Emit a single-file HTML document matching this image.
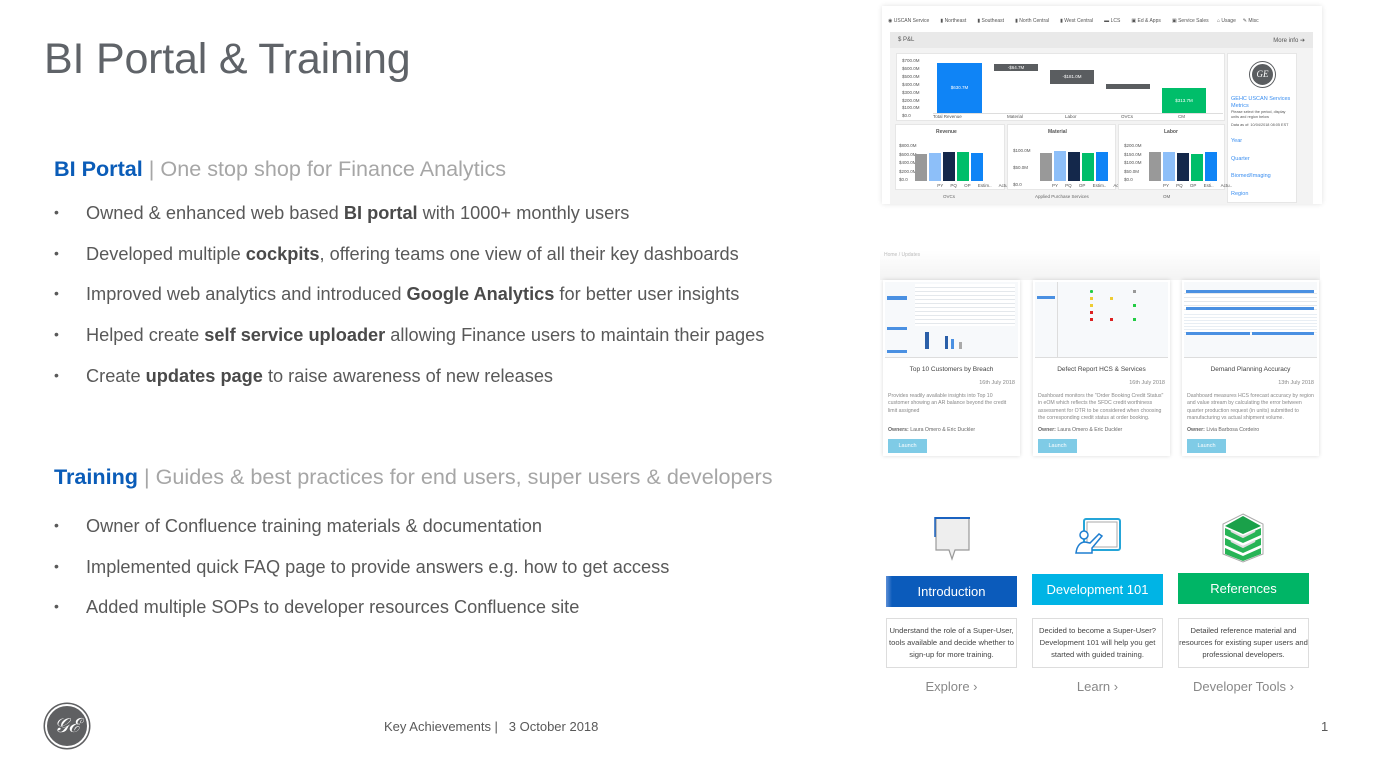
<!DOCTYPE html>
<html><head><meta charset="utf-8"><style>
*{margin:0;padding:0;box-sizing:border-box}
body{width:1373px;height:761px;background:#fff;position:relative;overflow:hidden;font-family:"Liberation Sans",sans-serif;color:#595959}
.a{position:absolute}
h1{position:absolute;left:44px;top:35px;font-weight:normal;font-size:43px;color:#5f6368;letter-spacing:-0.2px}
.hd{position:absolute;left:54px;font-size:21.6px;white-space:nowrap}
.hd b{color:#0a5cb8}
.hd span{color:#a6a6a6}
.bl{position:absolute;left:86px;font-size:18.2px;white-space:nowrap;color:#595959}
.bl:before{content:"•";position:absolute;left:-32px;font-size:14px;top:1px}
.bl b{color:#4a4a4a}
.f{font-size:6px;color:#555}
.box{position:absolute;background:#fff;border:1px solid #e6e6e6}
.bar{position:absolute;bottom:0}
.card{position:absolute;top:280px;width:137px;height:176px;background:#fff;box-shadow:0 0 4px rgba(0,0,0,.15)}
.card .im{position:absolute;left:2px;top:2px;right:2px;height:76px;background:#f7f9fb;border-bottom:1px solid #ddd;overflow:hidden}
.card .t{position:absolute;top:86px;width:100%;text-align:center;font-size:6.5px;color:#444}
.card .d{position:absolute;top:100px;right:5px;font-size:5.5px;color:#888}
.card .p{position:absolute;top:113px;left:5px;right:5px;font-size:5.2px;line-height:7.4px;color:#888}
.card .o{position:absolute;top:147px;left:5px;font-size:5.2px;color:#666}
.card .l{position:absolute;top:159px;left:5px;width:39px;height:14px;background:#7fcbe6;color:#fff;font-size:5.5px;text-align:center;line-height:14px}
.btn{position:absolute;width:131px;height:31px;color:#fff;font-size:13px;text-align:center;line-height:31px}
.ds{position:absolute;top:618px;width:131px;height:50px;border:1px solid #ddd;font-size:7.6px;line-height:12px;text-align:center;color:#444;padding-top:6px;white-space:nowrap;overflow:hidden}
.lk{position:absolute;top:679px;width:131px;text-align:center;font-size:13px;color:#888}
.v{position:absolute;font-size:4.5px;color:#555;white-space:nowrap}
</style></head><body>
<h1>BI Portal &amp; Training</h1>
<div class="hd" style="top:156px"><b>BI Portal</b> <span>| One stop shop for Finance Analytics</span></div>
<div class="bl" style="top:203px">Owned &amp; enhanced web based <b>BI portal</b> with 1000+ monthly users</div>
<div class="bl" style="top:244px">Developed multiple <b>cockpits</b>, offering teams one view of all their key dashboards</div>
<div class="bl" style="top:284px">Improved web analytics and introduced <b>Google Analytics</b> for better user insights</div>
<div class="bl" style="top:325px">Helped create <b>self service uploader</b> allowing Finance users to maintain their pages</div>
<div class="bl" style="top:366px">Create <b>updates page</b> to raise awareness of new releases</div>
<div class="hd" style="top:464px"><b>Training</b> <span>| Guides &amp; best practices for end users, super users &amp; developers</span></div>
<div class="bl" style="top:516px">Owner of Confluence training materials &amp; documentation</div>
<div class="bl" style="top:557px">Implemented quick FAQ page to provide answers e.g. how to get access</div>
<div class="bl" style="top:597px">Added multiple SOPs to developer resources Confluence site</div>

<!-- top dashboard -->
<div class="a" style="left:882px;top:6px;width:440px;height:198px;background:#fff;box-shadow:0 0 5px rgba(0,0,0,.12);overflow:hidden">
<div class="a f" style="left:6px;top:12px;white-space:nowrap;font-size:5px;word-spacing:0">◉ USCAN Service &nbsp;&nbsp;&nbsp;&nbsp;&nbsp;&nbsp; ▮ Northeast &nbsp;&nbsp;&nbsp;&nbsp;&nbsp;&nbsp; ▮ Southeast &nbsp;&nbsp;&nbsp;&nbsp;&nbsp;&nbsp; ▮ North Central &nbsp;&nbsp;&nbsp;&nbsp;&nbsp;&nbsp; ▮ West Central &nbsp;&nbsp;&nbsp;&nbsp;&nbsp;&nbsp; ▬ LCS &nbsp;&nbsp;&nbsp;&nbsp;&nbsp;&nbsp; ▣ Ed &amp; Apps &nbsp;&nbsp;&nbsp;&nbsp;&nbsp;&nbsp; ▣ Service Sales &nbsp;&nbsp;&nbsp;&nbsp; ⌂ Usage &nbsp;&nbsp;&nbsp; ✎ Misc</div>
<div class="a" style="left:8px;top:26px;width:423px;height:172px;background:#f3f3f3">
<div class="a" style="left:0;top:0;width:423px;height:16px;background:#e9e9e9;font-size:6px;color:#555;padding:5px 8px">$ P&amp;L<span style="float:right">More info ➔</span></div>
</div>
</div>
<div class="box" style="left:896px;top:53px;width:329px;height:68px">
<div class="a f" style="left:5px;top:3px;font-size:4.5px;line-height:7.9px">$700.0M<br>$600.0M<br>$500.0M<br>$400.0M<br>$300.0M<br>$200.0M<br>$100.0M<br>$0.0</div>
<div class="a" style="left:40px;top:9px;width:45px;height:50px;background:#0f84f6;color:#fff;font-size:4.5px;text-align:center;line-height:50px">$630.7M</div>
<div class="a" style="left:97px;top:10px;width:44px;height:7px;background:#5a5d60;color:#fff;font-size:4.5px;text-align:center;line-height:7px">-$64.7M</div>
<div class="a" style="left:153px;top:16px;width:44px;height:14px;background:#5a5d60;color:#fff;font-size:4.5px;text-align:center;line-height:14px">-$181.0M</div>
<div class="a" style="left:209px;top:30px;width:44px;height:5px;background:#5a5d60"></div>
<div class="a" style="left:265px;top:34px;width:44px;height:25px;background:#00be6a;color:#fff;font-size:4.5px;text-align:center;line-height:25px">$313.7M</div>
<div class="a" style="left:36px;top:59px;width:290px;border-top:1px solid #ddd"></div>
<div class="a" style="left:0;top:60px;width:329px;font-size:4.5px;color:#555;word-spacing:0"><span class="a" style="left:36px">Total Revenue</span><span class="a" style="left:110px">Material</span><span class="a" style="left:168px">Labor</span><span class="a" style="left:224px">OVCs</span><span class="a" style="left:281px">CM</span></div>
</div>
<div class="box" style="left:1227px;top:53px;width:70px;height:150px">
<div class="a" style="left:22px;top:8px;width:25px;height:25px;border-radius:50%;background:#5a5d60;border:2px solid #fff;box-shadow:0 0 0 1px #5a5d60;color:#fff;font:italic 9px 'Liberation Serif',serif;text-align:center;line-height:21px">GE</div>
<div class="a" style="left:3px;top:42px;font-size:5.5px;color:#3a8ef0;line-height:6.5px">GEHC USCAN Services<br>Metrics</div>
<div class="a" style="left:3px;top:56px;font-size:3.8px;color:#555;line-height:5px">Please select the period, display<br>units and region below</div>
<div class="a" style="left:3px;top:69px;font-size:3.8px;color:#555">Data as of: 10/04/2018 08:05 EST</div>
<div class="a" style="left:3px;top:79px;font-size:5.5px;color:#3a8ef0;line-height:17.5px">Year<br>Quarter<br>Biomed/Imaging<br>Region</div>
</div>
<div class="box" style="left:895px;top:124px;width:110px;height:66px"><div class="a f" style="left:40px;top:4px;font-weight:bold;font-size:5px">Revenue</div>
<div class="v" style="left:3px;top:17px;line-height:8.5px">$800.0M<br>$600.0M<br>$400.0M<br>$200.0M<br>$0.0</div>
<div class="a" style="left:16px;top:23px;height:33px;width:90px">
<div class="bar" style="left:3px;width:12px;height:27px;background:#999"></div><div class="bar" style="left:17px;width:12px;height:28px;background:#8dbff9"></div><div class="bar" style="left:31px;width:12px;height:29px;background:#14284b"></div><div class="bar" style="left:45px;width:12px;height:29px;background:#00be6a"></div><div class="bar" style="left:59px;width:12px;height:28px;background:#0f84f6"></div></div>
<div class="v" style="left:5px;top:58px;word-spacing:6px">&nbsp;&nbsp;&nbsp;&nbsp; PY PQ OP Estim.. Actu..</div></div>
<div class="box" style="left:1007px;top:124px;width:109px;height:66px"><div class="a f" style="left:40px;top:4px;font-weight:bold;font-size:5px">Material</div>
<div class="v" style="left:5px;top:17px;line-height:17px">$100.0M<br>$50.0M<br>$0.0</div>
<div class="a" style="left:16px;top:23px;height:33px;width:90px">
<div class="bar" style="left:16px;width:12px;height:28px;background:#999"></div><div class="bar" style="left:30px;width:12px;height:30px;background:#8dbff9"></div><div class="bar" style="left:44px;width:12px;height:29px;background:#14284b"></div><div class="bar" style="left:58px;width:12px;height:28px;background:#00be6a"></div><div class="bar" style="left:72px;width:12px;height:29px;background:#0f84f6"></div></div>
<div class="v" style="left:15px;top:58px;word-spacing:6px">&nbsp;&nbsp;&nbsp; PY PQ OP Estim.. Actu..</div></div>
<div class="box" style="left:1118px;top:124px;width:107px;height:66px"><div class="a f" style="left:45px;top:4px;font-weight:bold;font-size:5px">Labor</div>
<div class="v" style="left:5px;top:17px;line-height:8.5px">$200.0M<br>$150.0M<br>$100.0M<br>$50.0M<br>$0.0</div>
<div class="a" style="left:16px;top:23px;height:33px;width:90px">
<div class="bar" style="left:14px;width:12px;height:29px;background:#999"></div><div class="bar" style="left:28px;width:12px;height:29px;background:#8dbff9"></div><div class="bar" style="left:42px;width:12px;height:28px;background:#14284b"></div><div class="bar" style="left:56px;width:12px;height:27px;background:#00be6a"></div><div class="bar" style="left:70px;width:12px;height:29px;background:#0f84f6"></div></div>
<div class="v" style="left:15px;top:58px;word-spacing:6px">&nbsp;&nbsp;&nbsp; PY PQ OP Esti.. Actu..</div></div>
<div class="a" style="left:895px;top:192px;width:330px;height:10px;font-size:4.5px;color:#666"><span class="a" style="left:48px;top:2px">OVCs</span><span class="a" style="left:140px;top:2px">Applied Purchase Services</span><span class="a" style="left:268px;top:2px">OM</span></div>

<!-- middle cards -->
<div class="a" style="left:880px;top:250px;width:440px;height:30px;background:linear-gradient(#fff,#f3f3f3)"><span style="font-size:5px;color:#bbb;position:absolute;left:4px;top:2px">Home / Updates</span></div>
<div class="card" style="left:883px"><div class="im">
<div class="a" style="left:30px;top:2px;width:100px;height:42px;background:repeating-linear-gradient(#fff 0 3px,#e4e8ec 3px 4px)"></div>
<div class="a" style="left:40px;top:50px;width:4px;height:17px;background:#2a5fa8"></div><div class="a" style="left:60px;top:54px;width:3px;height:13px;background:#2a5fa8"></div><div class="a" style="left:66px;top:57px;width:3px;height:10px;background:#4a90e2"></div><div class="a" style="left:74px;top:60px;width:3px;height:7px;background:#aaa"></div>
<div class="a" style="left:2px;top:14px;width:20px;height:4px;background:#4a90e2"></div><div class="a" style="left:2px;top:45px;width:20px;height:3px;background:#4a90e2"></div><div class="a" style="left:2px;top:68px;width:20px;height:3px;background:#4a90e2"></div></div>
<div class="t">Top 10 Customers by Breach</div><div class="d">16th July 2018</div>
<div class="p">Provides readily available insights into Top 10 customer showing an AR balance beyond the credit limit assigned</div>
<div class="o"><b>Owners:</b> Laura Omero &amp; Eric Duckler</div><div class="l">Launch</div></div>
<div class="card" style="left:1033px"><div class="im">
<div class="a" style="left:2px;top:14px;width:18px;height:3px;background:#4a90e2"></div><div class="a" style="left:22px;top:0;width:1px;height:76px;background:#ddd"></div>
<div class="a" style="left:55px;top:8px;width:3px;height:3px;background:#2c4;border-radius:1px"></div><div class="a" style="left:55px;top:15px;width:3px;height:3px;background:#ec3"></div><div class="a" style="left:55px;top:22px;width:3px;height:3px;background:#ec3"></div><div class="a" style="left:55px;top:29px;width:3px;height:3px;background:#d22"></div><div class="a" style="left:55px;top:36px;width:3px;height:3px;background:#d22"></div>
<div class="a" style="left:75px;top:15px;width:3px;height:3px;background:#ec3"></div><div class="a" style="left:75px;top:36px;width:3px;height:3px;background:#d22"></div><div class="a" style="left:98px;top:8px;width:3px;height:3px;background:#999"></div><div class="a" style="left:98px;top:22px;width:3px;height:3px;background:#2c4"></div><div class="a" style="left:98px;top:36px;width:3px;height:3px;background:#2c4"></div></div>
<div class="t">Defect Report HCS &amp; Services</div><div class="d">16th July 2018</div>
<div class="p">Dashboard monitors the "Order Booking Credit Status" in eOM which reflects the SFDC credit worthiness assessment for OTR to be considered when choosing the corresponding credit status at order booking.</div>
<div class="o"><b>Owner:</b> Laura Omero &amp; Eric Duckler</div><div class="l">Launch</div></div>
<div class="card" style="left:1182px"><div class="im">
<div class="a" style="left:0;top:8px;width:133px;height:30px;background:repeating-linear-gradient(#fff 0 3px,#e4e8ec 3px 4px)"></div>
<div class="a" style="left:2px;top:8px;width:128px;height:3px;background:#4a90e2"></div><div class="a" style="left:2px;top:25px;width:128px;height:3px;background:#4a90e2"></div>
<div class="a" style="left:0;top:30px;width:133px;height:22px;background:repeating-linear-gradient(#fff 0 2px,#e8eef4 2px 3px)"></div>
<div class="a" style="left:2px;top:50px;width:64px;height:3px;background:#4a90e2"></div><div class="a" style="left:68px;top:50px;width:62px;height:3px;background:#4a90e2"></div></div>
<div class="t">Demand Planning Accuracy</div><div class="d">13th July 2018</div>
<div class="p">Dashboard measures HCS forecast accuracy by region and value stream by calculating the error between quarter production request (in units) submitted to manufacturing vs actual shipment volume.</div>
<div class="o"><b>Owner:</b> Livia Barbosa Cordeiro</div><div class="l">Launch</div></div>

<!-- bottom icons -->
<svg class="a" style="left:933px;top:516px" width="40" height="45" viewBox="0 0 40 45"><path d="M3 2h33v32H22l-3 9-3-9H3z" fill="#eee" stroke="#999" stroke-width="1.2"/><path d="M2 1h35v2H2z" fill="#1a62c0"/><path d="M2 1v20" stroke="#1a62c0" stroke-width="1.5"/></svg>
<svg class="a" style="left:1074px;top:517px" width="48" height="42" viewBox="0 0 48 42"><rect x="10" y="2" width="36" height="31" rx="2" fill="#fff" stroke="#25a5d8" stroke-width="2"/><rect x="13" y="5" width="30" height="25" fill="#fff" stroke="#aaa"/><circle cx="10" cy="18" r="4" fill="#fff" stroke="#1e7ed0" stroke-width="1.5"/><path d="M2 36c1-8 5-11 9-11l5 1 9-9 3 2-10 12v5z" fill="#fff" stroke="#1e7ed0" stroke-width="1.5"/></svg>
<svg class="a" style="left:1220px;top:512px" width="46" height="52" viewBox="0 0 46 52"><path d="M23 2L43 12v30L23 50 3 42V12z" fill="#fff" stroke="#aaa"/><path d="M5 14l18-10 18 10-18 8z" fill="#1aa14a"/><path d="M5 16l18 8 18-8v7l-18 8-18-8z" fill="#27b456"/><path d="M5 26l18 8 18-8v7l-18 8-18-8z" fill="#27b456"/><path d="M5 36l18 8 18-8v6l-18 7-18-7z" fill="#27b456"/><path d="M11 19l12 6 12-6M11 29l12 6 12-6" stroke="#ddd" fill="none" stroke-width="2"/></svg>
<div class="btn" style="left:886px;top:576px;background:linear-gradient(90deg,#5d8fd6 0,#0b5bbb 6px,#0b5bbb)">Introduction</div>
<div class="btn" style="left:1032px;top:574px;background:#00b4e5">Development 101</div>
<div class="btn" style="left:1178px;top:573px;background:#00b566">References</div>
<div class="ds" style="left:886px">Understand the role of a Super-User,<br>tools available and decide whether to<br>sign-up for more training.</div>
<div class="ds" style="left:1032px">Decided to become a Super-User?<br>Development 101 will help you get<br>started with guided training.</div>
<div class="ds" style="left:1178px">Detailed reference material and<br>resources for existing super users and<br>professional developers.</div>
<div class="lk" style="left:886px">Explore ›</div>
<div class="lk" style="left:1032px">Learn ›</div>
<div class="lk" style="left:1178px">Developer Tools ›</div>

<!-- footer -->
<div class="a" style="left:45px;top:704px;width:44px;height:44px;border-radius:50%;background:#5f6062;border:2px solid #fff;box-shadow:0 0 0 1.5px #5f6062;color:#fff;font:italic 20px 'Liberation Serif',serif;text-align:center;line-height:40px">𝒢ℰ</div>
<div class="a" style="left:384px;top:719px;font-size:13px;color:#595959;white-space:nowrap">Key Achievements | &nbsp;&nbsp;3 October 2018</div>
<div class="a" style="left:1321px;top:719px;font-size:13px;color:#595959">1</div>
</body></html>
